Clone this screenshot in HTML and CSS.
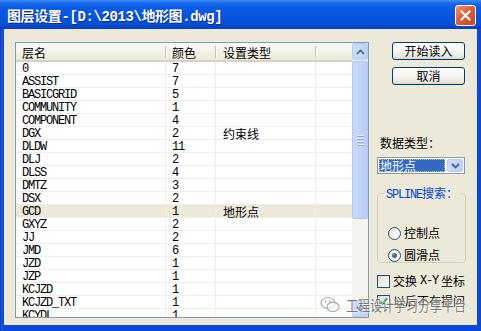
FILE: index.html
```html
<!DOCTYPE html>
<html lang="zh">
<head>
  <meta charset="UTF-8" />
  <title>图层设置</title>
  <link rel="stylesheet" href="styles.css">
</head>
<body>

<div class="window">
  <!-- Title bar -->
  <div class="title-bar">
    <span class="title">图层设置-[D:\2013\地形图.dwg]</span>
    <span class="close-btn">
      <svg width="11" height="11" viewBox="0 0 11 11"><path d="M1.5 1.5 L9.5 9.5 M9.5 1.5 L1.5 9.5" stroke="#fff" stroke-width="2" stroke-linecap="square"/></svg>
    </span>
  </div>

  <div class="dialog">
    <!-- Layer list -->
    <div class="list-box">
      <div class="list-main">
        <div class="list-head">
          <div class="hcell c-name">层名</div>
          <div class="hcell c-color">颜色</div>
          <div class="hcell c-type">设置类型</div>
          <div class="hcell c-extra"></div>
        </div>
        <div class="list-body">
          <div class="row"><div class="cell c-name">0</div><div class="cell c-color">7</div><div class="cell c-type"></div><div class="cell c-extra"></div></div>
          <div class="row"><div class="cell c-name">ASSIST</div><div class="cell c-color">7</div><div class="cell c-type"></div><div class="cell c-extra"></div></div>
          <div class="row"><div class="cell c-name">BASICGRID</div><div class="cell c-color">5</div><div class="cell c-type"></div><div class="cell c-extra"></div></div>
          <div class="row"><div class="cell c-name">COMMUNITY</div><div class="cell c-color">1</div><div class="cell c-type"></div><div class="cell c-extra"></div></div>
          <div class="row"><div class="cell c-name">COMPONENT</div><div class="cell c-color">4</div><div class="cell c-type"></div><div class="cell c-extra"></div></div>
          <div class="row"><div class="cell c-name">DGX</div><div class="cell c-color">2</div><div class="cell c-type">约束线</div><div class="cell c-extra"></div></div>
          <div class="row"><div class="cell c-name">DLDW</div><div class="cell c-color">11</div><div class="cell c-type"></div><div class="cell c-extra"></div></div>
          <div class="row"><div class="cell c-name">DLJ</div><div class="cell c-color">2</div><div class="cell c-type"></div><div class="cell c-extra"></div></div>
          <div class="row"><div class="cell c-name">DLSS</div><div class="cell c-color">4</div><div class="cell c-type"></div><div class="cell c-extra"></div></div>
          <div class="row"><div class="cell c-name">DMTZ</div><div class="cell c-color">3</div><div class="cell c-type"></div><div class="cell c-extra"></div></div>
          <div class="row"><div class="cell c-name">DSX</div><div class="cell c-color">2</div><div class="cell c-type"></div><div class="cell c-extra"></div></div>
          <div class="row sel"><div class="cell c-name">GCD</div><div class="cell c-color">1</div><div class="cell c-type">地形点</div><div class="cell c-extra"></div></div>
          <div class="row"><div class="cell c-name">GXYZ</div><div class="cell c-color">2</div><div class="cell c-type"></div><div class="cell c-extra"></div></div>
          <div class="row"><div class="cell c-name">JJ</div><div class="cell c-color">2</div><div class="cell c-type"></div><div class="cell c-extra"></div></div>
          <div class="row"><div class="cell c-name">JMD</div><div class="cell c-color">6</div><div class="cell c-type"></div><div class="cell c-extra"></div></div>
          <div class="row"><div class="cell c-name">JZD</div><div class="cell c-color">1</div><div class="cell c-type"></div><div class="cell c-extra"></div></div>
          <div class="row"><div class="cell c-name">JZP</div><div class="cell c-color">1</div><div class="cell c-type"></div><div class="cell c-extra"></div></div>
          <div class="row"><div class="cell c-name">KCJZD</div><div class="cell c-color">1</div><div class="cell c-type"></div><div class="cell c-extra"></div></div>
          <div class="row"><div class="cell c-name">KCJZD_TXT</div><div class="cell c-color">1</div><div class="cell c-type"></div><div class="cell c-extra"></div></div>
          <div class="row"><div class="cell c-name">KCYDL</div><div class="cell c-color">1</div><div class="cell c-type"></div><div class="cell c-extra"></div></div>
        </div>
      </div>
      <div class="scrollbar">
        <div class="sb-btn">
          <svg width="9" height="6" viewBox="0 0 9 6"><path d="M1 5 L4.5 1.5 L8 5" fill="none" stroke="#4d6185" stroke-width="1.6"/></svg>
        </div>
        <div class="sb-thumb">
          <span class="grip"></span><span class="grip"></span><span class="grip"></span><span class="grip"></span>
        </div>
        <div class="sb-track"></div>
        <div class="sb-btn">
          <svg width="9" height="6" viewBox="0 0 9 6"><path d="M1 1 L4.5 4.5 L8 1" fill="none" stroke="#4d6185" stroke-width="1.6"/></svg>
        </div>
      </div>
    </div>

    <!-- Right side controls -->
    <div class="side">
      <button class="btn">开始读入</button>
      <button class="btn btn-second">取消</button>

      <div class="label">数据类型：</div>
      <div class="select">
        <span class="select-value"><span class="focus">地形点</span></span>
        <span class="select-arrow">
          <svg width="9" height="6" viewBox="0 0 9 6"><path d="M1 1 L4.5 4.5 L8 1" fill="none" stroke="#4d6185" stroke-width="1.8"/></svg>
        </span>
      </div>

      <div class="group">
        <span class="group-title"><span class="mono">SPLINE</span>搜索：</span>
        <div class="opt opt-first"><span class="radio"></span>控制点</div>
        <div class="opt opt-second"><span class="radio checked"></span>圆滑点</div>
      </div>

      <div class="opt chk-first"><span class="check"></span>交换<span class="mono">X-Y</span>坐标</div>
      <div class="opt chk-second">
        <span class="check">
          <svg width="11" height="11" viewBox="0 0 11 11"><path d="M2 5.5 L4.5 8 L9 2.5" fill="none" stroke="#21a121" stroke-width="2"/></svg>
        </span>以后不在提问
      </div>
    </div>
  </div>

  <!-- watermark over the bottom right corner -->
  <div class="watermark">
    <svg width="20" height="18" viewBox="0 0 20 18">
      <ellipse cx="8" cy="7" rx="7" ry="5.5" fill="none" stroke="#a8a8a8" stroke-width="1.2"/>
      <ellipse cx="13" cy="11" rx="6" ry="4.6" fill="rgba(255,255,255,0.6)" stroke="#a8a8a8" stroke-width="1.2"/>
      <circle cx="5.5" cy="5.5" r="0.9" fill="#a8a8a8"/>
      <circle cx="10" cy="5.5" r="0.9" fill="#a8a8a8"/>
    </svg>
    <span class="wm-text">工程设计学习分享平台</span>
  </div>
</div>

</body>
</html>
```

FILE: styles.css
```css
body {
  margin: 0;
  padding: 0;
  background: #0a3fd0;
  font-family: "Noto Sans CJK SC", sans-serif;
  font-size: 12px;
  color: #000;
  overflow: hidden;
}
.mono {
  font-family: "Liberation Mono", "Noto Sans CJK SC", monospace;
  letter-spacing: -1.2px;
}

.window {
  position: relative;
  width: 481px;
  height: 331px;
  background: linear-gradient(90deg, #0a3fc8, #1656e0 2px, #0b48d6 4px);
  display: flex;
  flex-direction: column;
}

/* Title bar */
.title-bar {
  height: 29px;
  flex: none;
  box-sizing: border-box;
  display: flex;
  align-items: center;
  justify-content: space-between;
  padding: 0 5px 0 7px;
  background: linear-gradient(#3d8ef5 0, #1a6cee 3px, #0a5de6 7px, #0655e0 16px, #0650d8 23px, #0745c6 27px, #0a3fbd 29px);
}
.title {
  color: #fff;
  font-weight: bold;
  font-size: 14px;
  font-family: "Liberation Mono", "Noto Sans CJK SC", monospace;
  letter-spacing: -0.4px;
  text-shadow: 1px 1px #0c2c8c;
  margin-top: 1px;
}
.close-btn {
  width: 21px;
  height: 21px;
  box-sizing: border-box;
  border: 1px solid #fff;
  border-radius: 3px;
  background: linear-gradient(135deg, #f0946e, #e0603a 45%, #c4431f);
  display: flex;
  align-items: center;
  justify-content: center;
  margin-top: 2px;
}

/* Dialog body */
.dialog {
  flex: 1;
  margin: 0 4px 6px 4px;
  background: #ece9d8;
  display: flex;
  padding: 13px 0 0 11px;
}

/* List view */
.list-box {
  width: 354px;
  height: 276px;
  box-sizing: border-box;
  border: 1px solid #7f9db9;
  background: #fff;
  display: flex;
  overflow: hidden;
}
.list-main {
  width: 336px;
  display: flex;
  flex-direction: column;
}
.list-head {
  height: 19px;
  flex: none;
  box-sizing: border-box;
  display: flex;
  background: linear-gradient(#fbfaf6, #ebeadb);
  border-bottom: 2px solid #d6d2c2;
}
.hcell {
  position: relative;
  box-sizing: border-box;
  padding-left: 6px;
  line-height: 19px;
  font-size: 12px;
}
.hcell::after {
  content: "";
  position: absolute;
  right: 0;
  top: 3px;
  bottom: 2px;
  width: 1px;
  background: #c7c5b2;
  box-shadow: 1px 0 #fff;
}
.c-extra::after { display: none; }
.c-name { width: 150px; }
.c-color { width: 50px; }
.c-type { width: 100px; padding-left: 7px; }
.c-extra { width: 36px; }

.list-body {
  flex: 1;
  overflow: hidden;
}
.row {
  height: 13px;
  box-sizing: border-box;
  display: flex;
  border-bottom: 1px solid #efeee8;
}
.row.sel {
  background: #ece9d8;
}
.cell {
  box-sizing: border-box;
  padding-left: 6px;
  line-height: 14px;
  height: 12px;
  border-right: 1px solid #efeee8;
  font-family: "Liberation Mono", "Noto Sans CJK SC", monospace;
  letter-spacing: -1.2px;
  white-space: nowrap;
}
.cell.c-type {
  padding-left: 7px;
  line-height: 13px;
  font-family: "Noto Sans CJK SC", sans-serif;
  letter-spacing: 0;
}
.cell.c-extra {
  border-right: none;
}

/* Scrollbar */
.scrollbar {
  width: 16px;
  display: flex;
  flex-direction: column;
  background: #f4f3ee;
}
.sb-btn {
  height: 17px;
  flex: none;
  box-sizing: border-box;
  border: 1px solid #b8cdf6;
  border-radius: 2px;
  background: linear-gradient(90deg, #cddcfc, #bcd0fa);
  display: flex;
  align-items: center;
  justify-content: center;
}
.sb-thumb {
  height: 158px;
  flex: none;
  box-sizing: border-box;
  margin-top: 1px;
  border: 1px solid #b3c8f5;
  border-radius: 2px;
  background: linear-gradient(90deg, #c9dafc, #b8cdf8);
  display: flex;
  flex-direction: column;
  align-items: center;
  justify-content: center;
  gap: 1px;
}
.grip {
  width: 7px;
  height: 1px;
  background: #eef3fe;
  box-shadow: 0 1px #8ca6dc;
  margin-bottom: 1px;
}
.sb-track {
  flex: 1;
}

/* Side panel */
.side {
  width: 89px;
  margin-left: 8px;
  display: flex;
  flex-direction: column;
}
.btn {
  width: 73px;
  height: 18px;
  margin: 0 0 0 15px;
  padding: 0;
  border: 1px solid #003c74;
  border-radius: 3px;
  background: linear-gradient(#ffffff, #f3f2ed 60%, #e4e2d8 90%, #d6d0c5);
  font-family: "Noto Sans CJK SC", sans-serif;
  font-size: 12px;
  line-height: 16px;
  color: #000;
}
.btn-second {
  margin-top: 7px;
}
.label {
  margin-top: 51px;
  margin-left: 3px;
  line-height: 14px;
  font-size: 12px;
}
.select {
  margin-top: 7px;
  width: 88px;
  height: 17px;
  box-sizing: border-box;
  border: 1px solid #7f9db9;
  background: #fff;
  display: flex;
  align-items: stretch;
}
.select-value {
  flex: 1;
  padding: 1px;
  display: flex;
}
.focus {
  flex: 1;
  background: #316ac5;
  color: #fff;
  line-height: 13px;
  padding-left: 1px;
  outline: 1px dotted #d8c66a;
  outline-offset: -1px;
}
.select-arrow {
  width: 16px;
  box-sizing: border-box;
  margin: 1px;
  border: 1px solid #b8cdf6;
  border-radius: 2px;
  background: linear-gradient(90deg, #cddcfc, #bcd0fa);
  display: flex;
  align-items: center;
  justify-content: center;
}

/* Group box */
.group {
  margin-top: 19px;
  width: 89px;
  height: 70px;
  box-sizing: border-box;
  border: 1px solid #d0d0bf;
  border-radius: 4px;
}
.group-title {
  display: inline-block;
  margin: -8px 0 0 6px;
  padding: 0 2px;
  background: #ece9d8;
  color: #0046d5;
  line-height: 14px;
  vertical-align: top;
}
.opt {
  display: flex;
  align-items: center;
  height: 16px;
  line-height: 16px;
  gap: 3px;
  white-space: nowrap;
}
.opt-first {
  margin: 14px 0 0 10px;
}
.opt-second {
  margin: 6px 0 0 10px;
}
.radio {
  width: 13px;
  height: 13px;
  box-sizing: border-box;
  border: 1px solid #1c5180;
  border-radius: 50%;
  background: radial-gradient(circle at 65% 65%, #ffffff, #e6e4dc);
  display: flex;
  align-items: center;
  justify-content: center;
}
.radio.checked::after {
  content: "";
  width: 5px;
  height: 5px;
  border-radius: 50%;
  background: radial-gradient(circle at 35% 35%, #6a8a6a, #2f4f2f);
}
.chk-first {
  margin-top: 10px;
}
.chk-second {
  margin-top: 4px;
}
.check {
  width: 13px;
  height: 13px;
  box-sizing: border-box;
  border: 1px solid #1c5180;
  background: linear-gradient(135deg, #dcdbd5, #ffffff);
  display: flex;
  align-items: center;
  justify-content: center;
  flex: none;
}

/* Watermark */
.watermark {
  position: absolute;
  left: 320px;
  top: 296px;
  display: flex;
  align-items: center;
  gap: 6px;
}
.wm-text {
  display: inline-block;
  font-size: 15px;
  line-height: 18px;
  color: rgba(80, 80, 80, 0.75);
  text-shadow: 0 0 2px #fff, 0 0 2px #fff;
  transform: scaleX(0.8);
  transform-origin: left center;
  white-space: nowrap;
}
```
